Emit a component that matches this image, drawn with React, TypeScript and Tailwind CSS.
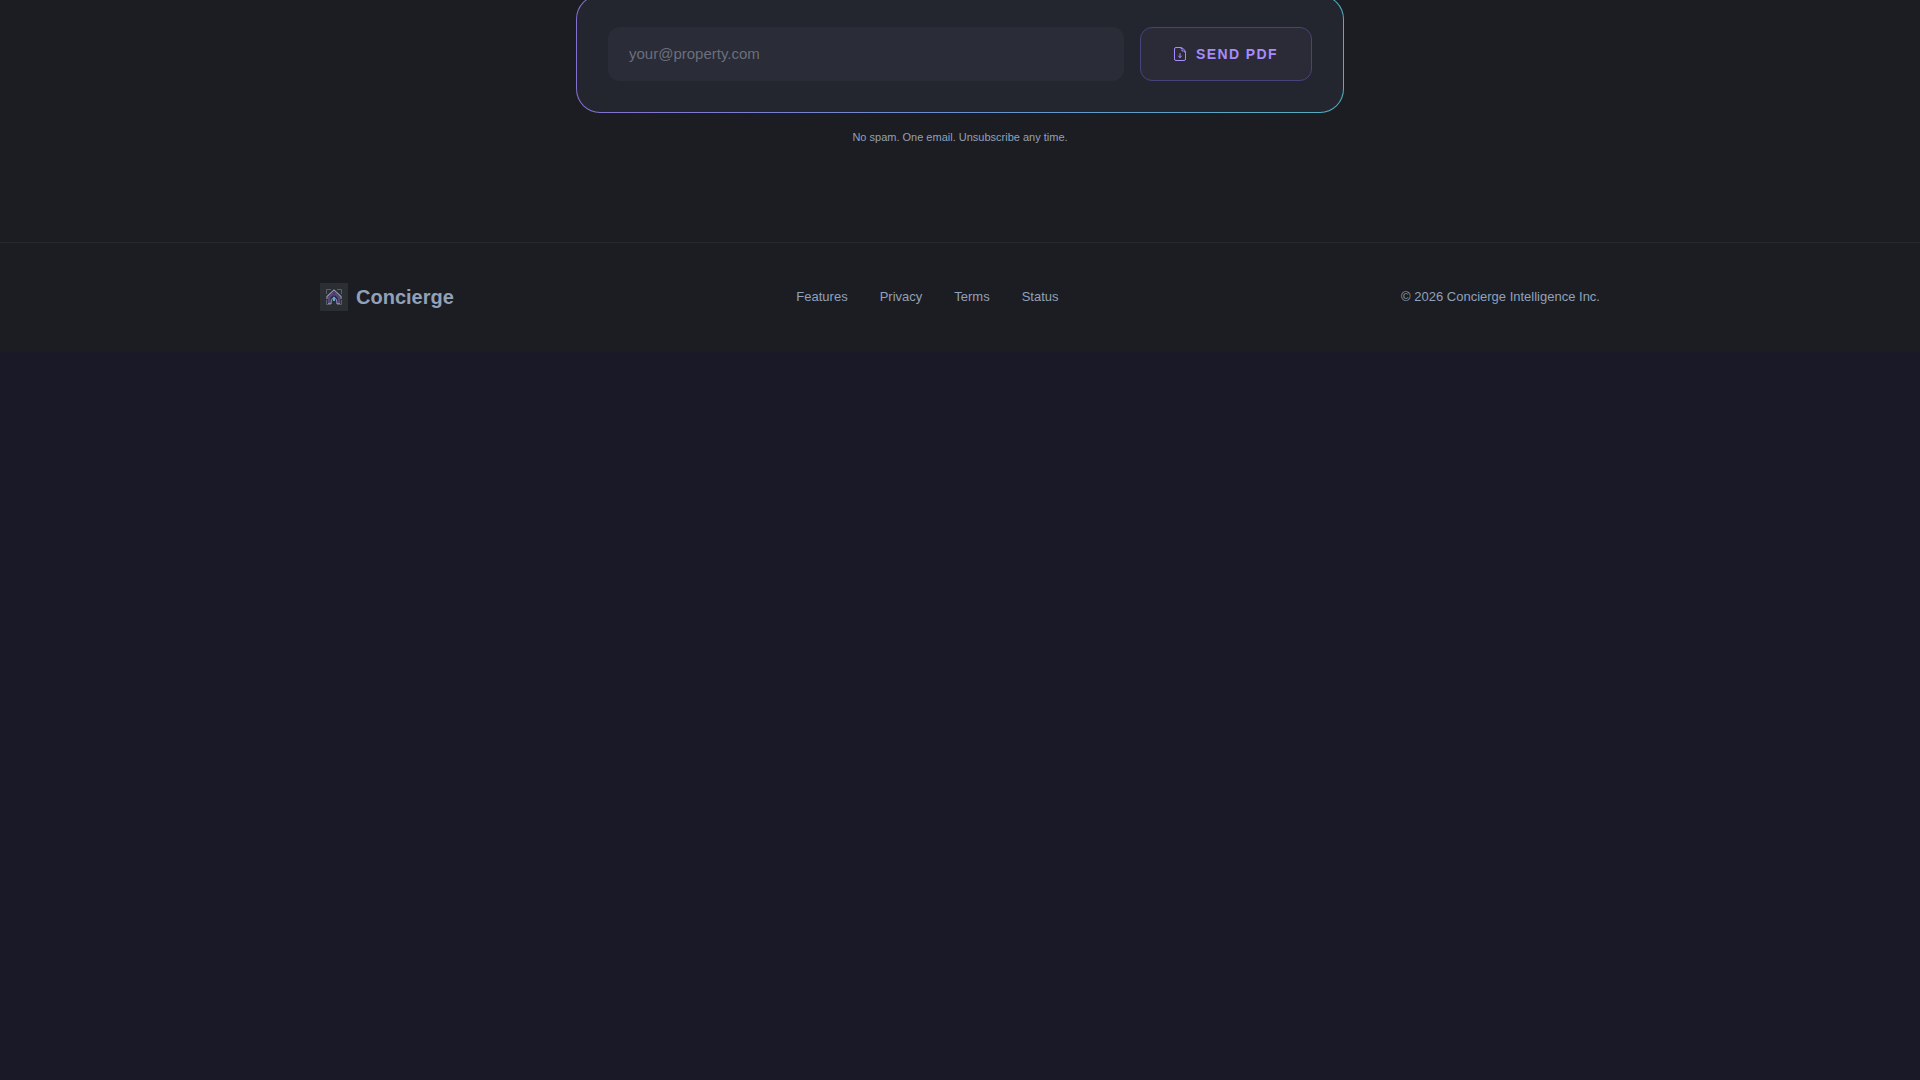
import { useState } from "react";

const footerLinks = [
  { label: "Features", href: "#features" },
  { label: "Privacy", href: "#privacy" },
  { label: "Terms", href: "#terms" },
  { label: "Status", href: "#status" },
];

const FileDownIcon = () => (
  <svg
    viewBox="0 0 12 14"
    className="h-[14px] w-3"
    fill="none"
    stroke="currentColor"
    strokeLinecap="round"
    strokeLinejoin="round"
    aria-hidden="true"
  >
    <path d="M7 .5H2A1.500 1.500 0 0 0 .5 2v10A1.500 1.500 0 0 0 2 13.500h8a1.500 1.500 0 0 0 1.500-1.500V6A5.500 5.500 0 0 0 6 .5" />
    <path d="M6 .5A2 2 0 0 1 8 2.500V4h1.500a2 2 0 0 1 2 2M6 6.500v4M4.500 9 6 10.500 7.500 9" />
  </svg>
);

const Logo = () => (
  <span className="flex size-7 items-center justify-center bg-[#2b2f34]">
    <svg viewBox="0 0 16 16" className="size-4" fill="none" aria-hidden="true">
      <path d="M.5 5V.5H5M11 .5h4.500V5M.5 11v4.500H5M11 15.500h4.500V11" stroke="#596068" />
      <path d="M1 10V7.500l7-6.500 7 6.500V10" stroke="#9698ac" strokeWidth="1.200" />
      <path d="M3 14V8.500L8 3.500l5 5V14" stroke="#54467f" strokeWidth="2.400" />
      <path d="M5 15c0-3 1-6 3-6s3 3 3 6" stroke="#8d86b8" strokeWidth="1.200" />
      <path d="M8 2.500v5" stroke="#4c3b73" strokeWidth="2" />
      <path d="M8 8v4" stroke="#5fa8cf" strokeWidth="2" />
      <path d="M2 14.500h3M11 14.500h3" stroke="#9a7f9f" />
    </svg>
  </span>
);

const SignupForm = () => {
  const [email, setEmail] = useState("");
  return (
    <div className="rounded-3xl bg-gradient-to-r from-[#8470d0] via-[#6a90d0] to-[#50b0c0] p-px">
      <form
        onSubmit={(e) => e.preventDefault()}
        className="flex gap-4 rounded-[23px] bg-[#24262f] p-[31px]"
      >
        <input
          type="email"
          aria-label="Email address"
          placeholder="your@property.com"
          value={email}
          onChange={(e) => setEmail(e.target.value)}
          className="h-[54px] min-w-0 flex-1 rounded-xl bg-[#2a2c37] px-[21px] pb-[2px] text-[15px] text-slate-200 outline-none placeholder:text-[#6b6f7d]"
        />
        <button
          type="submit"
          className="flex h-[54px] items-center gap-[10px] rounded-xl border border-[#48437c] bg-[#2a2b37] px-[33px] text-sm font-bold tracking-widest text-[#a78bfa]"
        >
          <FileDownIcon />
          SEND PDF
        </button>
      </form>
    </div>
  );
};

const Footer = () => (
  <footer className="border-t border-[#26282d] px-6 pt-10 pb-[41px] text-[13px] text-slate-400">
    <div className="mx-auto flex max-w-7xl items-center justify-between">
      <div className="flex items-center gap-2">
        <Logo />
        <span className="text-xl font-bold">Concierge</span>
      </div>
      <nav className="flex gap-8">
        {footerLinks.map((link) => (
          <a key={link.label} href={link.href} className="hover:text-white">
            {link.label}
          </a>
        ))}
      </nav>
      <p>© 2026 Concierge Intelligence Inc.</p>
    </div>
  </footer>
);

export default function App() {
  return (
    <div className="min-h-screen overflow-hidden bg-[#191927] font-['Liberation_Sans',sans-serif]">
      <main className="-mt-[5px] bg-[#1c1d22]">
        <section className="mx-auto max-w-3xl pb-24">
          <SignupForm />
          <p className="mt-4 text-center text-[11px] leading-[17px] text-slate-400">
            No spam. One email. Unsubscribe any time.
          </p>
        </section>
        <Footer />
      </main>
    </div>
  );
}
